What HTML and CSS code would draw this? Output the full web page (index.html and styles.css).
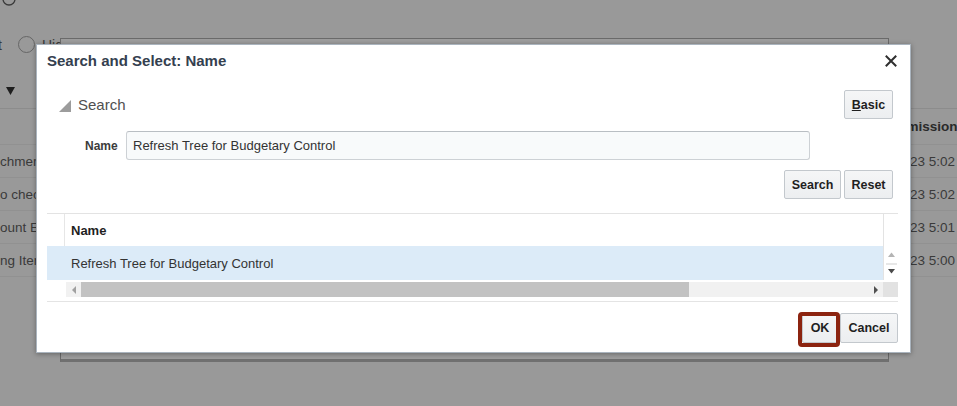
FILE: index.html
```html
<!DOCTYPE html>
<html lang="en">
<head>
<meta charset="utf-8">
<title>Search and Select: Name</title>
<link rel="stylesheet" href="styles.css">
</head>
<body>
<div class="page">
  <div class="info-row">
    <svg class="info-icon" width="14" height="14" viewBox="0 0 14 14"><circle cx="7" cy="7" r="6" fill="none" stroke="#3a3a3a" stroke-width="1.3"/></svg>
  </div>
  <div class="radio-row">
    <span class="tail">t</span>
    <span class="radio"></span>
    <span class="radio-label">Hidden</span>
  </div>
  <div class="menu-row">
    <svg width="9" height="8" viewBox="0 0 9 8"><path d="M0 0H9L4.5 8Z" fill="#1e1e1e"/></svg>
  </div>
  <div class="bg-table">
    <div class="bg-row bg-head"><span></span><span class="bg-right-head">Submission</span></div>
    <div class="bg-row"><span>chments</span><span class="bg-right">2023 5:02 AM</span></div>
    <div class="bg-row"><span>o check</span><span class="bg-right">2023 5:02 AM</span></div>
    <div class="bg-row"><span>ount Errors</span><span class="bg-right">2023 5:01 AM</span></div>
    <div class="bg-row"><span>ng Items</span><span class="bg-right">2023 5:00 AM</span></div>
  </div>
</div>

<div class="behind"></div>

<div class="dialog">
  <div class="dlg-head">
    <div class="dlg-title">Search and Select: Name</div>
    <span class="close"><svg width="12" height="12" viewBox="0 0 12 12"><path d="M1.5 1.5L10.5 10.5M10.5 1.5L1.5 10.5" stroke="#2f2f2f" stroke-width="2" stroke-linecap="square"/></svg></span>
  </div>
  <div class="dlg-body">
    <div class="sec-head">
      <div class="sec-title">
        <svg width="12" height="12" viewBox="0 0 12 12"><path d="M12 0V12H0Z" fill="#9c9c9c"/></svg>
        <span>Search</span>
      </div>
      <span class="btn btn-basic"><u>B</u>asic</span>
    </div>
    <div class="field-row">
      <span class="field-label">Name</span>
      <div class="input">Refresh Tree for Budgetary Control</div>
    </div>
    <div class="actions">
      <span class="btn btn-search">Search</span>
      <span class="btn btn-reset">Reset</span>
    </div>
    <div class="table">
      <div class="t-row t-head">
        <div class="t-gutter"></div>
        <div class="t-cell">Name</div>
        <div class="t-vs"></div>
      </div>
      <div class="t-row t-data">
        <div class="t-gutter"></div>
        <div class="t-cell">Refresh Tree for Budgetary Control</div>
        <div class="t-vs">
          <svg width="15" height="34" viewBox="0 0 15 34"><path d="M4 11L7.5 6.5L11 11Z" fill="#b4b4b4"/><path d="M2 18H13" stroke="#cfcfcf" stroke-width="1"/><path d="M4 23L7.5 27.5L11 23Z" fill="#4a4a4a"/></svg>
        </div>
      </div>
      <div class="hscroll">
        <div class="hs-lead"></div>
        <div class="hs-track">
          <div class="hs-btn"><svg width="6" height="8" viewBox="0 0 6 8"><path d="M5 0V8L1 4Z" fill="#a0a0a0"/></svg></div>
          <div class="hs-thumb"></div>
          <div class="hs-rest"></div>
          <div class="hs-btn"><svg width="6" height="8" viewBox="0 0 6 8"><path d="M1 0V8L5 4Z" fill="#505050"/></svg></div>
        </div>
        <div class="hs-corner"></div>
      </div>
    </div>
  </div>
  <div class="dlg-foot">
    <span class="btn btn-ok">OK</span>
    <span class="btn btn-cancel">Cancel</span>
  </div>
</div>
</body>
</html>
```

FILE: styles.css
```css
* { box-sizing: border-box; }
html, body { margin: 0; padding: 0; }
body {
  width: 957px;
  height: 406px;
  overflow: hidden;
  background: #999999;
  font-family: "Liberation Sans", Arial, sans-serif;
  font-size: 13px;
  color: #3a3a3a;
  position: relative;
}

/* background page */
.page { width: 957px; }
.info-row {
  height: 6px;
  padding-left: 2px;
  display: flex;
  align-items: flex-end;
}
.info-icon { display: block; flex: none; }
.radio-row {
  margin-top: 30px;
  height: 17px;
  display: flex;
  align-items: center;
  font-size: 14px;
}
.tail { margin-left: -2px; width: 20px; }
.radio {
  width: 17px; height: 17px;
  border: 1px solid #666;
  border-radius: 50%;
  margin-right: 7px;
}
.menu-row {
  margin-top: 28px;
  height: 20px;
  display: flex;
  align-items: center;
  padding-left: 6px;
}
.bg-table { margin-top: 7px; border-top: 1px solid #8c8c8c; }
.bg-row {
  display: grid;
  grid-template-columns: 881px 1fr;
  height: 33px;
  align-items: center;
  border-bottom: 1px solid #919191;
  white-space: nowrap;
  font-size: 13.5px;
}
.bg-head { height: 36px; }
.bg-right-head { font-weight: bold; color: #2a2a2a; }
.bg-right { padding-left: 14px; }

/* dialog behind */
.behind {
  position: absolute;
  left: 60px; top: 38px;
  width: 829px; height: 324px;
  background: #9d9d9d;
  border: 1px solid #6a6a6a;
  border-bottom: 3px solid #707070;
}

/* main dialog */
.dialog {
  position: absolute;
  left: 36px; top: 44px;
  width: 875px; height: 309px;
  background: #ffffff;
  border: 1px solid #aab4be;
  box-shadow: 0 1px 5px rgba(0,0,0,0.35);
  display: flex;
  flex-direction: column;
}
.dlg-head {
  height: 31px;
  display: flex;
  align-items: center;
  justify-content: space-between;
  padding: 0 13px 0 10px;
}
.dlg-title {
  font-size: 15px;
  font-weight: bold;
  color: #34404f;
}
.close { display: flex; margin-top: 1px; }
.dlg-body { padding: 14px 12px 0 10px; }
.sec-head {
  height: 29px;
  display: flex;
  align-items: center;
  justify-content: space-between;
  padding-right: 5px;
}
.sec-title {
  display: flex;
  align-items: center;
  gap: 7px;
  padding-left: 12px;
  font-size: 15px;
  color: #505050;
}
.sec-title svg { margin-top: 2px; }
.btn {
  display: inline-flex;
  align-items: center;
  justify-content: center;
  height: 29px;
  background: linear-gradient(#f5f6f7, #eceef0);
  border: 1px solid #c3c8cd;
  border-radius: 2px;
  font-size: 12.5px;
  font-weight: bold;
  color: #1f1f1f;
}
.btn-basic { width: 49px; }
.btn-search { width: 57px; }
.btn-reset { width: 49px; }
.field-row {
  margin-top: 12px;
  height: 29px;
  display: flex;
  align-items: center;
  padding-left: 38px;
}
.field-label {
  width: 41px;
  font-size: 12px;
  font-weight: bold;
  color: #3c3c3c;
}
.input {
  width: 684px;
  height: 29px;
  display: flex;
  align-items: center;
  padding-left: 6px;
  background: #f8fafb;
  border: 1px solid #cdd1d5;
  border-top-color: #b9bec3;
  border-radius: 3px;
  color: #333;
  font-size: 13px;
}
.actions {
  margin-top: 10px;
  display: flex;
  justify-content: flex-end;
  gap: 3px;
  padding-right: 5px;
}
.table { margin-top: 14px; border-top: 1px solid #e3e3e3; }
.t-row { display: flex; }
.t-gutter { width: 18px; border-right: 1px solid #e6e6e6; }
.t-cell {
  width: 818px;
  display: flex;
  align-items: center;
  padding-left: 6px;
  color: #333;
}
.t-vs { width: 15px; border-left: 1px solid #e3e3e3; }
.t-head { height: 32px; }
.t-head .t-cell { font-weight: bold; color: #1f1f1f; }
.t-data { height: 34px; }
.t-data .t-gutter, .t-data .t-cell { background: #dcebf8; border-right: none; }
.t-data .t-gutter { width: 18px; }
.t-data .t-vs svg { display: block; }
.hscroll {
  display: flex;
  height: 15px;
  margin-top: 2px;
  margin-bottom: 4px;
}
.hs-lead { width: 19px; }
.hs-track {
  width: 817px;
  display: flex;
  background: #f1f1f1;
}
.hs-btn {
  width: 15px;
  display: flex;
  align-items: center;
  justify-content: center;
}
.hs-thumb { width: 608px; background: #c2c2c2; }
.hs-rest { flex: 1; }
.hs-corner { width: 15px; background: #e2e2e2; }
.dlg-foot {
  margin: 0 12px 0 10px;
  border-top: 1px solid #e4e4e4;
  padding-top: 11px;
  display: flex;
  justify-content: flex-end;
  gap: 2px;
}
.btn-ok { width: 36px; height: 30px; position: relative; }
.btn-ok::after {
  content: "";
  position: absolute;
  top: -2px; left: -5px; right: -3px; bottom: -5px;
  border: 4px solid #8c2410;
  border-radius: 4px;
}
.btn-cancel { width: 58px; height: 30px; }
```
